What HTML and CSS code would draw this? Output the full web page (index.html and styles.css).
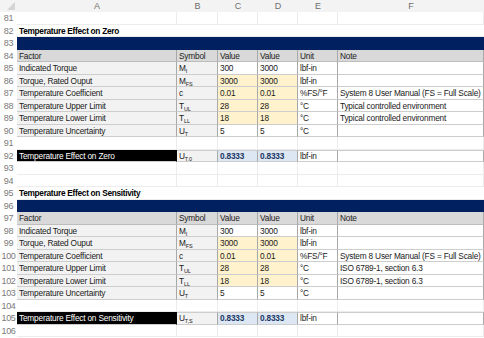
FILE: index.html
```html
<!DOCTYPE html>
<html>
<head>
<meta charset="utf-8">
<link rel="stylesheet" href="styles.css">
</head>
<body>
<div class="sheet">
  <div class="row hdr">
    <div class="corner"><svg width="10" height="10" viewBox="0 0 10 10"><polygon points="9,1 9,9 1,9" fill="#d4d4d4"/></svg></div>
    <div class="ch">A</div><div class="ch">B</div><div class="ch">C</div><div class="ch">D</div><div class="ch">E</div><div class="ch">F</div>
  </div>

  <div class="row"><div class="rn">81</div><div class="c"></div><div class="c"></div><div class="c"></div><div class="c"></div><div class="c"></div><div class="c"></div></div>
  <div class="row"><div class="rn">82</div><div class="c title span6">Temperature Effect on Zero</div></div>
  <div class="row"><div class="rn">83</div><div class="c band span6"></div></div>
  <div class="row"><div class="rn">84</div><div class="c t th">Factor</div><div class="c t th">Symbol</div><div class="c t th">Value</div><div class="c t th">Value</div><div class="c t th">Unit</div><div class="c t th">Note</div></div>
  <div class="row"><div class="rn">85</div><div class="c t">Indicated Torque</div><div class="c t">M<span class="sub">I</span></div><div class="c t w">300</div><div class="c t w">3000</div><div class="c t w">lbf-in</div><div class="c t w"></div></div>
  <div class="row"><div class="rn">86</div><div class="c t">Torque, Rated Ouput</div><div class="c t">M<span class="sub">FS</span></div><div class="c t in">3000</div><div class="c t in">3000</div><div class="c t w">lbf-in</div><div class="c t w"></div></div>
  <div class="row"><div class="rn">87</div><div class="c t">Temperature Coefficient</div><div class="c t">c</div><div class="c t in">0.01</div><div class="c t in">0.01</div><div class="c t w">%FS/°F</div><div class="c t w">System 8 User Manual (FS = Full Scale)</div></div>
  <div class="row"><div class="rn">88</div><div class="c t">Temperature Upper Limit</div><div class="c t">T<span class="sub">UL</span></div><div class="c t in">28</div><div class="c t in">28</div><div class="c t w">°C</div><div class="c t w">Typical controlled environment</div></div>
  <div class="row"><div class="rn">89</div><div class="c t">Temperature Lower Limit</div><div class="c t">T<span class="sub">LL</span></div><div class="c t in">18</div><div class="c t in">18</div><div class="c t w">°C</div><div class="c t w">Typical controlled environment</div></div>
  <div class="row"><div class="rn">90</div><div class="c t">Temperature Uncertainty</div><div class="c t">U<span class="sub">T</span></div><div class="c t w">5</div><div class="c t w">5</div><div class="c t w">°C</div><div class="c t w"></div></div>
  <div class="row"><div class="rn">91</div><div class="c"></div><div class="c"></div><div class="c"></div><div class="c"></div><div class="c"></div><div class="c"></div></div>
  <div class="row"><div class="rn">92</div><div class="c t blk">Temperature Effect on Zero</div><div class="c t rt">U<span class="sub">T,0</span></div><div class="c t rt res">0.8333</div><div class="c t rt res">0.8333</div><div class="c t rt w">lbf-in</div><div class="c t rt w"></div></div>
  <div class="row"><div class="rn">93</div><div class="c"></div><div class="c"></div><div class="c"></div><div class="c"></div><div class="c"></div><div class="c"></div></div>
  <div class="row"><div class="rn">94</div><div class="c"></div><div class="c"></div><div class="c"></div><div class="c"></div><div class="c"></div><div class="c"></div></div>
  <div class="row"><div class="rn">95</div><div class="c title span6">Temperature Effect on Sensitivity</div></div>
  <div class="row"><div class="rn">96</div><div class="c band span6"></div></div>
  <div class="row"><div class="rn">97</div><div class="c t th">Factor</div><div class="c t th">Symbol</div><div class="c t th">Value</div><div class="c t th">Value</div><div class="c t th">Unit</div><div class="c t th">Note</div></div>
  <div class="row"><div class="rn">98</div><div class="c t">Indicated Torque</div><div class="c t">M<span class="sub">I</span></div><div class="c t w">300</div><div class="c t w">3000</div><div class="c t w">lbf-in</div><div class="c t w"></div></div>
  <div class="row"><div class="rn">99</div><div class="c t">Torque, Rated Ouput</div><div class="c t">M<span class="sub">FS</span></div><div class="c t in">3000</div><div class="c t in">3000</div><div class="c t w">lbf-in</div><div class="c t w"></div></div>
  <div class="row"><div class="rn">100</div><div class="c t">Temperature Coefficient</div><div class="c t">c</div><div class="c t in">0.01</div><div class="c t in">0.01</div><div class="c t w">%FS/°F</div><div class="c t w">System 8 User Manual (FS = Full Scale)</div></div>
  <div class="row"><div class="rn">101</div><div class="c t">Temperature Upper Limit</div><div class="c t">T<span class="sub">UL</span></div><div class="c t in">28</div><div class="c t in">28</div><div class="c t w">°C</div><div class="c t w">ISO 6789-1, section 6.3</div></div>
  <div class="row"><div class="rn">102</div><div class="c t">Temperature Lower Limit</div><div class="c t">T<span class="sub">LL</span></div><div class="c t in">18</div><div class="c t in">18</div><div class="c t w">°C</div><div class="c t w">ISO 6789-1, section 6.3</div></div>
  <div class="row"><div class="rn">103</div><div class="c t">Temperature Uncertainty</div><div class="c t">U<span class="sub">T</span></div><div class="c t w">5</div><div class="c t w">5</div><div class="c t w">°C</div><div class="c t w"></div></div>
  <div class="row"><div class="rn">104</div><div class="c"></div><div class="c"></div><div class="c"></div><div class="c"></div><div class="c"></div><div class="c"></div></div>
  <div class="row"><div class="rn">105</div><div class="c t blk">Temperature Effect on Sensitivity</div><div class="c t rt">U<span class="sub">T,S</span></div><div class="c t rt res">0.8333</div><div class="c t rt res">0.8333</div><div class="c t rt w">lbf-in</div><div class="c t rt w"></div></div>
  <div class="row"><div class="rn">106</div><div class="c"></div><div class="c"></div><div class="c"></div><div class="c"></div><div class="c"></div><div class="c"></div></div>
</div>
</body>
</html>
```

FILE: styles.css
```css
html, body {
  margin: 0;
  padding: 0;
  background: #ffffff;
  overflow: hidden;
}

.sheet {
  width: 484px;
  height: 338px;
  font-family: "Liberation Sans", Arial, sans-serif;
  font-size: 8.3px;
  letter-spacing: -0.2px;
  color: #1a1a1a;
}

.row {
  display: grid;
  grid-template-columns: 17px 160px 41px 40px 40px 40px 146px;
  height: 12.5px;
}

.row.hdr {
  height: 12px;
  background: #f3f3f3;
}

.corner {
  display: flex;
  align-items: flex-end;
  justify-content: flex-end;
  padding: 0 1px 1px 0;
}

.ch {
  text-align: center;
  color: #6e6e6e;
  font-size: 9px;
  letter-spacing: 0;
  line-height: 12px;
}

.rn {
  text-align: center;
  color: #7a7a7a;
  font-size: 9px;
  letter-spacing: -0.3px;
  line-height: 12.5px;
  white-space: nowrap;
}

.c {
  box-sizing: border-box;
  border-right: 1px solid #ececec;
  border-bottom: 1px solid #ececec;
  padding: 0 2px;
  line-height: 12px;
  white-space: nowrap;
  overflow: hidden;
}

.span6 {
  grid-column: 2 / 8;
}

.title {
  font-weight: bold;
  color: #000;
  border-right: none;
  letter-spacing: -0.3px;
}

.band {
  background: #002060;
  border-bottom: none;
  border-right: none;
}

.t {
  background: #f2f2f2;
  border-right: 1px solid #a9a9a9;
  border-bottom: 1px solid #cdcdcd;
}

.t.rt {
  border-top: 1px solid #cdcdcd;
  line-height: 10.5px;
}

.th {
  background: #d9d9d9;
  border-bottom: 1px solid #bdbdbd;
}

.w {
  background: #ffffff;
}

.in {
  background: #fff2cc;
}

.res {
  background: #dde7f4;
  color: #1f3864;
  font-weight: bold;
}

.blk {
  background: #000000;
  color: #ffffff;
  border-right: 1px solid #000;
}

.sub {
  font-size: 5.5px;
  letter-spacing: 0;
  vertical-align: -2px;
  line-height: 0;
}
```
